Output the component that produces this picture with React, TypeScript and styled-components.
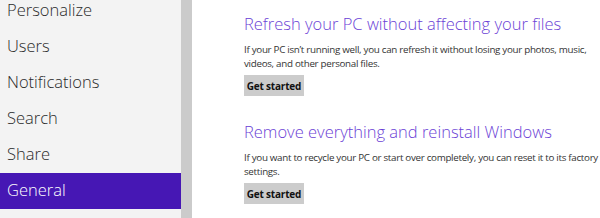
import styled, { createGlobalStyle } from "styled-components";

const GlobalStyle = createGlobalStyle`
  html, body {
    margin: 0;
    padding: 0;
    background: #ffffff;
    overflow: hidden;
  }
`;

const Page = styled.div`
  display: flex;
  width: 600px;
  height: 218px;
  overflow: hidden;
  font-family: "Open Sans", "Noto Sans", sans-serif;
`;

const Nav = styled.ul`
  width: 181px;
  flex-shrink: 0;
  margin: 0;
  padding: 0;
  list-style: none;
  background: #f3f3f3;
  border-right: 11px solid #cbcbcb;
  overflow: hidden;
`;

const NavList = styled.div`
  margin-top: -7px;
`;

const NavItem = styled.li<{ $active?: boolean }>`
  height: 36px;
  line-height: 33px;
  padding-left: 7px;
  font-size: 16.5px;
  font-weight: 300;
  color: ${(p) => (p.$active ? "#ffffff" : "#2a2a2a")};
  background: ${(p) => (p.$active ? "#4617b4" : "transparent")};
`;

const Main = styled.div`
  flex: 1;
  padding: 13px 0 0 52px;
`;

const Section = styled.section`
  & + & {
    margin-top: 25px;
  }
`;

const Heading = styled.h2`
  margin: 0 0 8px;
  font-size: 16.5px;
  font-weight: 300;
  line-height: 22px;
  color: #6b3fd6;
  white-space: nowrap;
`;

const Text = styled.p`
  margin: 0 0 4px;
  font-size: 9.8px;
  line-height: 14px;
  letter-spacing: -0.3px;
  color: #333333;
  white-space: nowrap;
`;

const Button = styled.button`
  display: block;
  height: 21px;
  width: 60px;
  padding: 0;
  border: none;
  background: #cccccc;
  color: #111111;
  font-family: inherit;
  font-size: 10px;
  font-weight: 700;
  letter-spacing: -0.2px;
`;

const items = ["Personalize", "Users", "Notifications", "Search", "Share", "General", ""];

const sections = [
  {
    title: "Refresh your PC without affecting your files",
    lines: [
      "If your PC isn\u2019t running well, you can refresh it without losing your photos, music,",
      "videos, and other personal files.",
    ],
  },
  {
    title: "Remove everything and reinstall Windows",
    lines: [
      "If you want to recycle your PC or start over completely, you can reset it to its factory",
      "settings.",
    ],
  },
];

export default function App() {
  return (
    <>
      <GlobalStyle />
      <Page>
        <Nav>
          <NavList>
            {items.map((item, i) => (
              <NavItem key={i} $active={item === "General"}>
                {item}
              </NavItem>
            ))}
          </NavList>
        </Nav>
        <Main>
          {sections.map((s) => (
            <Section key={s.title}>
              <Heading>{s.title}</Heading>
              <Text>
                {s.lines[0]}
                <br />
                {s.lines[1]}
              </Text>
              <Button>Get started</Button>
            </Section>
          ))}
        </Main>
      </Page>
    </>
  );
}
